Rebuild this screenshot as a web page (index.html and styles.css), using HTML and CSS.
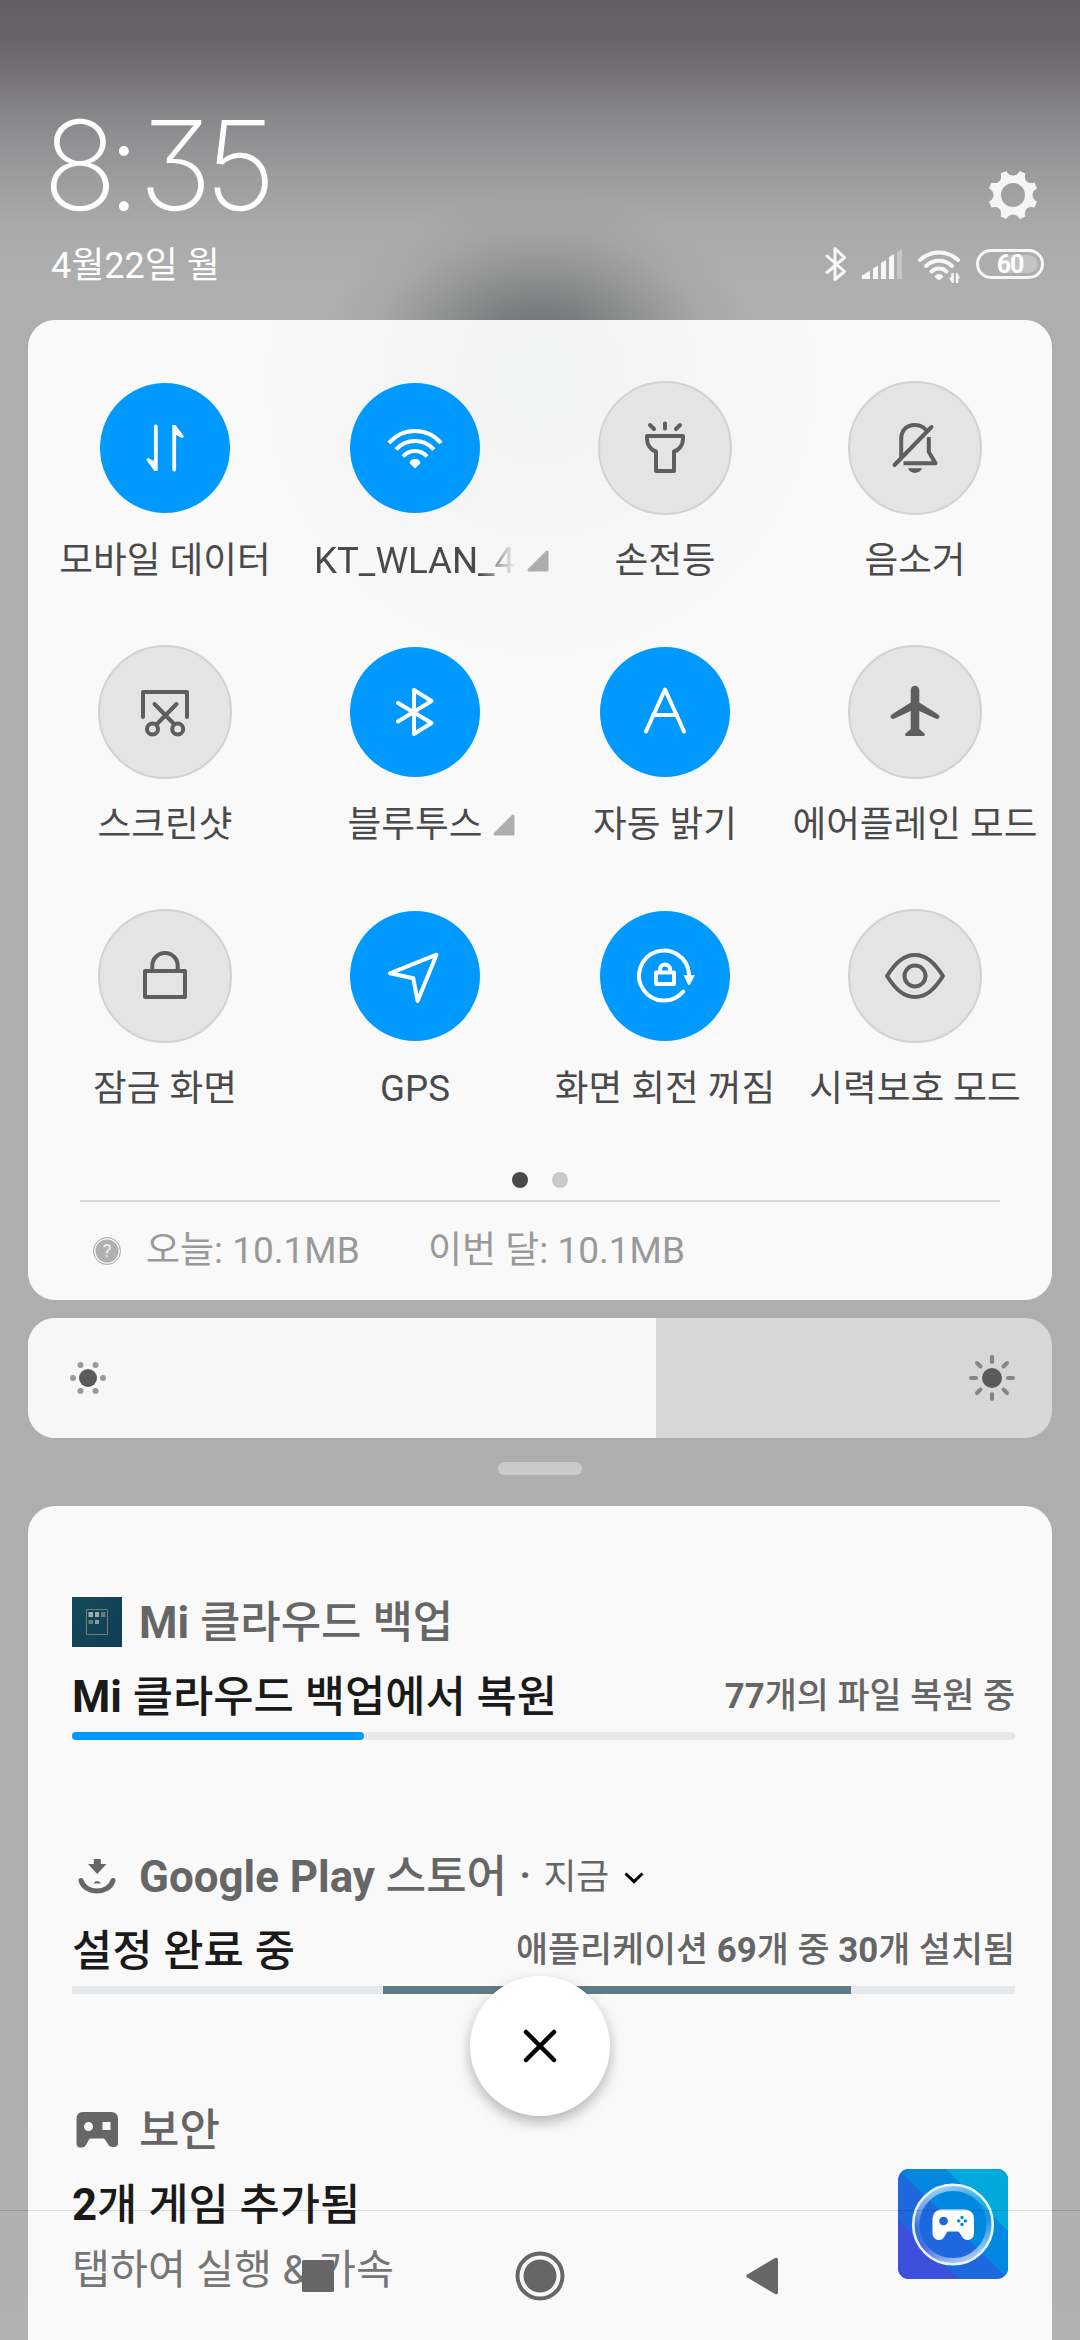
FILE: index.html
```html
<!DOCTYPE html>
<html lang="ko">
<head>
<meta charset="utf-8">
<title>알림 창</title>
<link rel="stylesheet" href="styles.css">
</head>
<body>
<div class="screen">
  <header class="header">
    <div class="clock-row">
      <div class="clock"><span class="hour">8</span><span class="colon">:</span>35</div>
      <svg class="gear" viewBox="-24 -24 48 48"><path fill-rule="evenodd" d="M-12.5 -21.5 L-6.6 -24 C-4 -18 4 -18 6.6 -24 L12.5 -21.5 C10.2 -15 15 -10.2 21.5 -12.5 L24 -6.6 C18 -4 18 4 24 6.6 L21.5 12.5 C15 10.2 10.2 15 12.5 21.5 L6.6 24 C4 18 -4 18 -6.6 24 L-12.5 21.5 C-10.2 15 -15 10.2 -21.5 12.5 L-24 6.6 C-18 4 -18 -4 -24 -6.6 L-21.5 -12.5 C-15 -10.2 -10.2 -15 -12.5 -21.5Z M0 -12 A12 12 0 1 0 0 12 A12 12 0 1 0 0 -12Z"/></svg>
    </div>
    <div class="status-row">
      <div class="date">4월22일 월</div>
      <div class="status">
        <svg class="st-bt" viewBox="0 0 22 36"><path d="M2 10 L19.5 25.5 L10 33.5 V2.5 L19.5 11.5 L2 26.5"/></svg>
        <svg class="st-signal" viewBox="0 0 40 30"><path d="M0 30 V26.5 L8 21.5 V30Z M11 30 V19.5 L16 16.5 V30Z M19 30 V14 L24 11 V30Z M27 30 V8 L32 5 V30Z"/><path class="dim" d="M35 30 V3 L40 0 V30Z"/></svg>
        <svg class="st-wifi" viewBox="0 0 42 34"><g class="arc"><path d="M2 11 A27.5 27.5 0 0 1 40 11"/><path d="M8 17 A19 19 0 0 1 34 17"/><path d="M13.5 22.5 A11 11 0 0 1 28.500 22.500"/></g><path d="M21 25 a4.300 4.300 0 0 1 4.300 3 L21 31.500 L16.700 28 A4.300 4.300 0 0 1 21 25Z"/><path d="M35.800 34 H34 L31 28.500 H33.300 V24 H35.800Z M37.800 24 H39.500 L42 29.500 H40.300 V34 H37.800Z"/></svg>
        <div class="battery"><span class="battery-level"></span><span class="battery-text">60</span></div>
      </div>
    </div>
  </header>

  <section class="panel">
    <div class="tiles">
      <div class="tile on"><div class="disc"><svg viewBox="-30 -30 60 60"><path class="solid" d="M-7.300 -21.500 V23 H-10.500 L-19 11.500 L-17 10 L-11.100 13 V-21.500 A1.900 1.900 0 0 1 -7.300 -21.500Z M7.300 21.500 V-23 H10.500 L19 -11.500 L17 -10 L11.100 -13 V21.500 A1.900 1.900 0 0 1 7.300 21.500Z"/></svg></div><div class="label">모바일 데이터</div></div>
      <div class="tile on"><div class="disc"><svg viewBox="-30 -30 60 60"><path class="flat" d="M-26 -5 A34 34 0 0 1 26 -5 M-19 1.500 A25.500 25.500 0 0 1 19 1.500 M-12 8.500 A16 16 0 0 1 12 8.500"/><path class="solid" d="M0 11 A5.500 5.500 0 0 1 5.500 15 L0 20.500 L-5.500 15 A5.500 5.500 0 0 1 0 11Z"/></svg></div><div class="label"><span class="faded">KT_WLAN_4</span><svg class="more" viewBox="0 0 22 22"><path d="M2 20 L20 2 V20Z"/></svg></div></div>
      <div class="tile"><div class="disc"><svg viewBox="-30 -30 60 60"><path d="M0 -24.500 V-19.500 M-15 -23 L-11 -19 M15 -23 L11 -19 M-18 -12 H18 V-9 C18 -3 14 2 9 3.500 V23 H-9 V3.500 C-14 2 -18 -3 -18 -9Z"/></svg></div><div class="label">손전등</div></div>
      <div class="tile"><div class="disc"><svg viewBox="-30 -30 60 60"><path d="M-20.500 17 L16.500 -21 M-13.800 9 V-9 C-13.800 -26 6 -26 11.500 -17.500"/><path class="flat" d="M13.800 -11 V4 L20.500 15.300 H-11.500"/><path class="solid" d="M-7 20.300 H7 C5 26.500 -5 26.500 -7 20.300Z"/></svg></div><div class="label">음소거</div></div>

      <div class="tile"><div class="disc"><svg viewBox="-30 -30 60 60"><path d="M-22 5 V-20 H22 V5 M-10.500 -8 L9 12 M11.500 -8 L-8 12"/><circle cx="-12.500" cy="17" r="5.500"/><circle cx="12.700" cy="17" r="5.500"/></svg></div><div class="label">스크린샷</div></div>
      <div class="tile on"><div class="disc"><svg viewBox="-30 -30 60 60"><path d="M-17 -9 L16.500 11 L-1 22 V-22 L16.500 -11 L-17 9.500"/></svg></div><div class="label">블루투스<svg class="more" viewBox="0 0 22 22"><path d="M2 20 L20 2 V20Z"/></svg></div></div>
      <div class="tile on"><div class="disc"><svg viewBox="-30 -30 60 60"><path d="M-19 19.500 L0 -22.500 L19 19.500 M-12 3 H12"/></svg></div><div class="label">자동 밝기</div></div>
      <div class="tile"><div class="disc"><svg viewBox="-30 -30 60 60"><path class="solid" d="M-4.300 -22 A4.300 4.300 0 0 1 4.300 -22 V-9.500 L22.500 2 Q25.500 4 24 6 Q23 7.500 20.500 6.500 L4.300 -1 V17 L9.500 21.500 Q10.500 24 8.500 24 H-8.500 Q-10.500 24 -9.500 21.500 L-4.300 17 V-1 L-20.500 6.500 Q-23 7.500 -24 6 Q-25.500 4 -22.500 2 L-4.300 -9.500Z"/></svg></div><div class="label">에어플레인 모드</div></div>

      <div class="tile"><div class="disc"><svg viewBox="-30 -30 60 60"><path d="M-20 -5 H20 V21 H-20Z M-12.700 -6 V-10.300 A12.700 12.700 0 0 1 12.700 -10.300 V-6"/></svg></div><div class="label">잠금 화면</div></div>
      <div class="tile on"><div class="disc"><svg viewBox="-30 -30 60 60"><path d="M21.500 -21.300 L-25 -2.700 L-1.700 2.300 L2.600 25Z"/></svg></div><div class="label">GPS</div></div>
      <div class="tile on"><div class="disc"><svg viewBox="-30 -30 60 60"><path d="M24 -2 A25 25 0 1 0 18.300 15.500 M-9 -3.500 H9 V8 H-9Z M-5 -4 V-6.500 A5 5 0 0 1 5 -6.500 V-4"/><path class="solid" d="M18.500 -1 H30 L25 8.500 Q24 9.500 23 8.500Z"/></svg></div><div class="label">화면 회전 꺼짐</div></div>
      <div class="tile"><div class="disc"><svg viewBox="-30 -30 60 60"><path d="M-28 0 C-19 -14 -11 -21 0 -21 S19 -14 28 0 C19 14 11 21 0 21 S-19 14 -28 0Z"/><circle r="10.500"/></svg></div><div class="label">시력보호 모드</div></div>
    </div>
    <div class="pager"><span class="dot active"></span><span class="dot"></span></div>
    <div class="usage">
      <span class="help">?</span>
      <span class="today">오늘: 10.1MB</span>
      <span>이번 달: 10.1MB</span>
    </div>
  </section>

  <section class="brightness">
    <div class="level">
      <svg class="sun" viewBox="-24 -24 48 48"><circle class="core" r="9"/><g class="rays"><circle cx="-15" r="3"/><circle cx="15" r="3"/><circle cx="-7.500" cy="-13" r="3"/><circle cx="7.500" cy="-13" r="3"/><circle cx="-7.500" cy="13" r="3"/><circle cx="7.500" cy="13" r="3"/></g></svg>
    </div>
    <svg class="sun" viewBox="-24 -24 48 48"><circle class="core" r="10"/><path class="beams" d="M0 -21 V-16 M0 21 V16 M-21 0 H-16 M21 0 H16 M-15 -15 L-11.500 -11.500 M15 -15 L11.500 -11.500 M-15 15 L-11.500 11.500 M15 15 L11.500 11.500"/></svg>
  </section>

  <div class="handle"></div>

  <section class="notifications">
    <article class="note">
      <div class="note-head">
        <svg class="app" viewBox="0 0 50 50"><defs><linearGradient id="teal" x1="0" y1="0" x2="1" y2="1"><stop offset="0" stop-color="#124c58"/><stop offset="1" stop-color="#123c54"/></linearGradient></defs><path fill="url(#teal)" d="M0 0H50V50H0Z"/><path fill="none" stroke="#6d7f80" d="M14.500 12.500H35.500V37.500H14.500Z"/><path fill="#a5a8a5" d="M16.500 15H21V20H16.500Z M23 15H27V20H23Z"/><path fill="#647c80" d="M29 15H33.500V20H29Z M16.500 23H21V27H16.500Z"/><path fill="#8e9898" d="M23 23H27V27H23Z"/></svg>
        <span class="app-name"><b>Mi</b> 클라우드 백업</span>
      </div>
      <div class="note-title"><span><b>Mi</b> 클라우드 백업에서 복원</span><span class="info"><b>77</b>개의 파일 복원 중</span></div>
      <div class="bar round"><span class="fill"></span></div>
    </article>

    <article class="note">
      <div class="note-head">
        <svg class="app" viewBox="0 0 50 50"><path fill="#666" d="M21.800 8 H28.800 V13 H34.500 L25.200 23 L16 13 H21.800Z M21.500 32.500 A4 4 0 0 1 29 32.500Z"/><path fill="none" stroke="#666" stroke-width="5" stroke-linecap="round" d="M9 29.500 C13 43.500 37 43.500 41 29.500"/></svg>
        <span class="app-name"><b>Google Play</b> 스토어</span><span class="sep">·</span><span class="when">지금</span>
        <svg class="chevron" viewBox="0 0 20 12"><path d="M1.500 1.500 L10 9.700 L18.500 1.500"/></svg>
      </div>
      <div class="note-title"><span>설정 완료 중</span><span class="info">애플리케이션 <b>69</b>개 중 <b>30</b>개 설치됨</span></div>
      <div class="bar slate"><span class="fill"></span></div>
    </article>

    <article class="note last">
      <div class="note-text">
        <div class="note-head">
          <svg class="app" viewBox="0 0 50 50"><path fill="#666" fill-rule="evenodd" d="M11 7 H39 Q46 7 46 14 V38 Q46 42 42 42 H40 Q38 42 36.500 40 L33 34.500 Q32.500 33.500 31 33.500 H19 Q17.500 33.500 17 34.500 L14 40 Q12.500 42.500 10 42.500 H8 Q4.500 42.500 4.500 38 V14 Q4.500 7 11 7Z M16.500 17 a4.500 4.500 0 1 0 .01 0Z M30.500 17 V25 H38.500 V17Z"/></svg>
          <span class="app-name">보안</span>
        </div>
        <div class="note-title"><span><b>2</b>개 게임 추가됨</span></div>
        <div class="note-body">탭하여 실행 &amp; 가속</div>
      </div>
      <svg class="game" viewBox="0 0 110 110">
        <defs>
          <clipPath id="tileClip"><rect width="110" height="110" rx="11"/></clipPath>
          <linearGradient id="gloss" x1=".2" y1="0" x2=".6" y2="1"><stop offset="0" stop-color="#fff" stop-opacity=".65"/><stop offset=".4" stop-color="#fff" stop-opacity=".1"/><stop offset=".65" stop-color="#fff" stop-opacity=".1"/><stop offset="1" stop-color="#fff" stop-opacity=".6"/></linearGradient>
        </defs>
        <g clip-path="url(#tileClip)">
          <path fill="#1e68de" d="M0 0H110V110H0Z"/><path fill="#0088e0" d="M0 0H110V110Z"/><path fill="#02a9dc" d="M48 0H110V62Z"/><path fill="#3d50dc" d="M0 51V110H60Z"/>
        </g>
        <circle cx="55" cy="55.500" r="36.500" fill="none" stroke="url(#gloss)" stroke-width="6"/>
        <circle cx="55" cy="55.500" r="39.800" fill="none" stroke="#e8f3fd" stroke-width="2.600"/>
        <path fill="#fff" fill-rule="evenodd" d="M43 40.500 H67 Q76 41 76 50 V65 Q75 71 69 71 Q65 70.500 63 66 L61 63 Q60.500 62.500 60 62.500 H50 Q49.500 62.500 49 63 L47 66.500 Q45 71 41 71 Q35 70.500 34.500 65 V50 Q35 41 43 40.500Z M45.500 47.700 a4.300 4.300 0 1 0 .01 0Z M64 46.700 a1.700 1.700 0 1 0 .01 0Z M64 53.700 a1.700 1.700 0 1 0 .01 0Z M60.700 50.200 a1.700 1.700 0 1 0 .01 0Z M67.500 50.200 a1.700 1.700 0 1 0 .01 0Z"/>
      </svg>
    </article>
  </section>

  <button class="clear" aria-label="모두 지우기"><svg viewBox="-20 -20 40 40"><path d="M-14 -14 L14 14 M14 -14 L-14 14"/></svg></button>

  <nav class="navbar">
    <svg viewBox="-30 -30 60 60"><rect x="-16" y="-16" width="32" height="32" rx="1.500"/></svg>
    <svg viewBox="-30 -30 60 60"><circle r="16.500"/><circle class="ring" r="22.500"/></svg>
    <svg viewBox="-30 -30 60 60"><path d="M-15 -1.200 L13 -18 Q16 -19 16 -16.500 V16.500 Q16 19 13 18 L-15 1.200 Q-16.500 0 -15 -1.200Z"/></svg>
  </nav>
</div>
</body>
</html>
```
FILE: styles.css
```css
* { box-sizing: border-box; }

body { margin: 0; }

svg { display: block; flex: none; }

.screen {
  position: relative;
  width: 1080px;
  height: 2340px;
  overflow: hidden;
  display: flex;
  flex-direction: column;
  padding: 0 28px;
  font-family: Roboto, "Noto Sans CJK KR", sans-serif;
  background:
    radial-gradient(ellipse 215px 150px at 540px 345px, rgba(80, 81, 84, .64), rgba(80, 81, 84, .6) 15%, rgba(80, 82, 84, .47) 32%, rgba(80, 84, 82, .26) 55%, rgba(90, 92, 90, .09) 76%, rgba(100, 100, 100, 0)),
    linear-gradient(#625f64 0, #68656a 40px, #7a777c 84px, #868688 112px, #949496 150px, #a0a0a0 190px, #aaaaaa 230px, #aeaeae 280px, #aeaeae 2000px, #b1b1b1 2340px);
}

.header {
  height: 320px;
  padding: 105px 7px 0 21px;
  color: #fff;
}

.clock-row {
  display: flex;
  justify-content: space-between;
  height: 120px;
}

.clock {
  margin-left: -6.500px;
  font: 200 124px/120px Inter, sans-serif;
  font-feature-settings: "cv09";
  letter-spacing: -7.800px;
}

.hour { letter-spacing: -10.700px; }

.colon { letter-spacing: -2.500px; }

.gear {
  width: 48px;
  height: 48px;
  margin: 66px 8px 0 0;
  fill: #f5f5f5;
}

.status-row {
  display: flex;
  justify-content: space-between;
  align-items: center;
  height: 80px;
}

.date {
  font-size: 36px;
  line-height: 50px;
  padding: 1px 0 0 2px;
}

.status {
  display: flex;
  align-items: center;
  padding: 0 1px 2px 0;
  fill: #f7f7f7;
}

.st-bt {
  width: 22px;
  height: 36px;
  margin-right: 15px;
  fill: none;
  stroke: #f7f7f7;
  stroke-width: 3;
  stroke-linejoin: round;
  stroke-linecap: round;
}

.st-signal { width: 40px; height: 30px; margin-right: 16px; }

.dim { opacity: .35; }

.st-wifi { width: 42px; height: 34px; margin: 3px 16px 0 0; }

.arc {
  fill: none;
  stroke: #f7f7f7;
  stroke-width: 4;
  stroke-linecap: round;
}

.battery {
  position: relative;
  width: 68px;
  height: 30px;
  border: 3px solid #f7f7f7;
  border-radius: 15px;
  display: flex;
  justify-content: center;
  align-items: center;
}

.battery-level {
  position: absolute;
  right: 3px;
  top: 3px;
  width: 40px;
  height: 18px;
  border-radius: 9px;
  background: rgba(255, 255, 255, .28);
}

.battery-text {
  position: relative;
  padding-top: 1px;
  font: 700 25px/24px Roboto, sans-serif;
  letter-spacing: -1px;
}

.panel {
  height: 980px;
  border-radius: 27px;
  background: radial-gradient(circle 280px at 512px 60px, #f2f3f3, #f5f5f5 45%, #f9f9f9) #f9f9f9;
}

.tiles {
  display: grid;
  grid-template-columns: repeat(4, 250px);
  grid-auto-rows: 264px;
  padding: 61px 0 0 12px;
  height: 852px;
}

.tile {
  display: flex;
  flex-direction: column;
  align-items: center;
}

.disc {
  width: 134px;
  height: 134px;
  border: 2px solid #d2d2d2;
  border-radius: 50%;
  background: #e4e4e4;
  display: flex;
  justify-content: center;
  align-items: center;
}

.on .disc {
  width: 130px;
  height: 130px;
  margin: 2px;
  border: 0;
  background: #0099ff;
}

.disc svg {
  width: 60px;
  height: 60px;
  overflow: visible;
  fill: none;
  stroke: #5c5e5f;
  stroke-width: 4;
  stroke-linejoin: round;
  stroke-linecap: round;
}

.on .disc svg { stroke: #fff; }

.disc .flat { stroke-linecap: butt; }

.disc .solid { fill: #5c5e5f; stroke: none; }

.on .disc .solid { fill: #fff; }

.label {
  position: relative;
  margin-top: 21px;
  font-size: 36.67px;
  line-height: 50px;
  white-space: nowrap;
  color: #4a4a4a;
}

.faded {
  display: block;
  width: 202px;
  overflow: hidden;
  -webkit-mask-image: linear-gradient(to right, #000 82%, transparent);
  mask-image: linear-gradient(to right, #000 82%, transparent);
}

.more {
  position: absolute;
  left: 100%;
  top: 14px;
  width: 22px;
  height: 22px;
  margin-left: 11px;
  fill: #adadad;
  stroke: #adadad;
  stroke-width: 3;
  stroke-linejoin: round;
}

.pager {
  display: flex;
  justify-content: center;
  gap: 24px;
  height: 30px;
  margin: 0 52px;
  border-bottom: 2px solid #d9d9d9;
}

.dot {
  width: 16px;
  height: 16px;
  border-radius: 50%;
  background: #c8c8c8;
}

.dot.active { background: #4a4a4a; }

.usage {
  display: flex;
  align-items: center;
  height: 98px;
  padding-left: 65px;
  font-size: 37px;
  line-height: 50px;
  color: #999;
}

.help {
  width: 28px;
  height: 28px;
  margin-right: 25px;
  border: 1.500px solid #b0b0b0;
  border-radius: 50%;
  background: #b0b0b0;
  box-shadow: inset 0 0 0 1.500px #f9f9f9;
  color: #f4f4f4;
  font-size: 18px;
  line-height: 25px;
  text-align: center;
}

.today { width: 282px; }

.brightness {
  display: flex;
  justify-content: space-between;
  align-items: center;
  height: 120px;
  margin-top: 18px;
  padding-right: 36px;
  border-radius: 27px;
  overflow: hidden;
  background: #d7d7d7;
}

.level {
  display: flex;
  align-items: center;
  width: 628px;
  height: 120px;
  padding-left: 36px;
  background: #f7f7f7;
}

.sun { width: 48px; height: 48px; }

.core { fill: #5a5a5a; }

.rays { fill: #999; }

.beams {
  stroke: #858585;
  stroke-width: 4;
  stroke-linecap: round;
}

.handle {
  width: 84px;
  height: 13px;
  margin: 24px auto 31px;
  border-radius: 6px;
  background: #cacaca;
}

.notifications {
  height: 834px;
  padding: 81px 37px 0 44px;
  border-radius: 27px 27px 0 0;
  background: #f9f9f9;
}

.note { height: 254px; }

.note-head {
  display: flex;
  align-items: center;
  height: 70px;
  font-size: 43.900px;
  line-height: 60px;
  color: #666;
}

.app { width: 50px; height: 50px; }

.app-name { margin-left: 17px; padding-top: 2px; font-weight: 500; }

.sep { margin: 0 12px; font-weight: 500; }

.when { padding-top: 1px; font-size: 35.750px; }

.chevron {
  width: 20px;
  height: 12px;
  margin: 3px 0 0 15px;
  fill: none;
  stroke: #000;
  stroke-width: 3;
}

.note-title {
  display: flex;
  justify-content: space-between;
  align-items: center;
  height: 75px;
  padding-top: 4px;
  font-size: 43.750px;
  line-height: 60px;
  font-weight: 500;
  color: #1a1a1a;
}

.info { font-size: 34.830px; color: #666; }

.bar {
  height: 8px;
  background: #e8e8e8;
}

.bar.round { border-radius: 4px; }

.fill {
  display: block;
  width: 292px;
  height: 8px;
  border-radius: 4px;
  background: #0099ff;
}

.slate { background: #e4e8eb; }

.slate .fill {
  width: 468px;
  margin-left: 311px;
  border-radius: 0;
  background: #5e7b87;
}

.last {
  display: flex;
  justify-content: space-between;
  padding-right: 7px;
}

.note-body {
  font-size: 41.250px;
  line-height: 60px;
  color: #757575;
}

.game {
  width: 110px;
  height: 110px;
  margin-top: 74px;
}

.clear {
  position: absolute;
  left: 470px;
  top: 1976px;
  width: 140px;
  height: 140px;
  padding: 0;
  border: 0;
  border-radius: 50%;
  background: #fff;
  box-shadow: 0 6px 14px rgba(0, 0, 0, .28);
  display: flex;
  justify-content: center;
  align-items: center;
}

.clear svg {
  width: 40px;
  height: 40px;
  stroke: #000;
  stroke-width: 4.500;
  stroke-linecap: round;
}

.navbar {
  position: absolute;
  left: 0;
  right: 0;
  bottom: 0;
  height: 130px;
  border-top: 1px solid rgba(0, 0, 0, .12);
  display: flex;
  justify-content: center;
  align-items: center;
  gap: 162px;
  fill: #666;
}

.navbar svg { width: 60px; height: 60px; }

.ring {
  fill: none;
  stroke: #666;
  stroke-width: 4;
}
```
